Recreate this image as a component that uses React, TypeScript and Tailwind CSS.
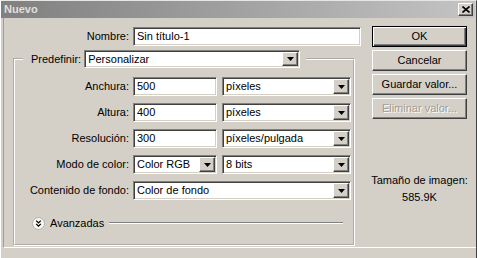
import React from "react";

const sunken =
  "border border-t-[#808080] border-l-[#808080] border-b-white border-r-white shadow-[inset_1px_1px_0_#404040,inset_-1px_-1px_0_#d4d0c8]";
const raised =
  "border border-t-white border-l-white border-b-[#404040] border-r-[#404040] shadow-[inset_-1px_-1px_0_#808080]";

function Field({ value, w }: { value: string; w: string }) {
  return (
    <div className={`${w} h-[19px] bg-white ${sunken} flex items-center pl-[3px] leading-none`}>
      {value}
    </div>
  );
}

function Arrow() {
  return (
    <div className={`w-[16px] h-full bg-[#d4d0c8] ${raised} flex items-center justify-center`}>
      <svg width="7" height="4" viewBox="0 0 7 4">
        <path d="M0 0H7L3.5 4Z" fill="#000" />
      </svg>
    </div>
  );
}

function Select({ value, w, h = "h-[19px]" }: { value: string; w: string; h?: string }) {
  return (
    <div className={`${w} ${h} bg-white ${sunken} flex items-stretch p-[1px]`}>
      <span className="flex-1 flex items-center pl-[2px] leading-none">{value}</span>
      <Arrow />
    </div>
  );
}

function Row({ label, children }: { label: string; children: React.ReactNode }) {
  return (
    <div className="flex items-center h-[19px]">
      <span className="w-[115px] text-right pr-[1px]">{label}</span>
      <div className="ml-[3px] flex gap-[5px]">{children}</div>
    </div>
  );
}

function Button({ label, main, disabled }: { label: string; main?: boolean; disabled?: boolean }) {
  if (main) {
    return (
      <div className="h-[21px] border border-black shadow-[inset_1px_1px_0_#fff,inset_-1px_-1px_0_#404040,inset_-2px_-2px_0_#808080] flex items-center justify-center">
        {label}
      </div>
    );
  }
  return (
    <div
      className={`h-[21px] ${raised} flex items-center justify-center ${
        disabled ? "text-[#a09d98] [text-shadow:1px_1px_0_#fff]" : ""
      }`}
    >
      {label}
    </div>
  );
}

export default function App() {
  return (
    <div className="w-[477px] h-[258px] bg-[#d4d0c8] border-t border-l border-t-[#e8e6e2] border-l-white border-r border-r-[#404040] text-[11px] text-black font-['Liberation_Sans',Arial,sans-serif] overflow-hidden">
      <div className="h-[17px] mr-[1px] flex items-center justify-between bg-gradient-to-r from-[#808080] to-[#c4c4c4] pl-[3px] pr-[2px]">
        <span className="font-bold text-[#e2dfda] leading-none">Nuevo</span>
        <div className={`w-[15px] h-[13px] bg-[#d4d0c8] ${raised} flex items-center justify-center`}>
          <svg width="8" height="7" viewBox="0 0 8 7">
            <path d="M0.5 0.5L7.5 6.5M7.5 0.5L0.5 6.5" stroke="#000" strokeWidth="1.6" />
          </svg>
        </div>
      </div>

      <div className="h-[230px] ml-[2px] border-l border-l-[#a09c96] border-b border-b-white flex pl-[9px]">
        <div className="w-[348px] pt-[9px]">
          <div className="flex items-center h-[19px]">
            <span className="w-[117px] text-right pr-[1px]">Nombre:</span>
            <div className="ml-[3px]">
              <Field value="Sin título-1" w="w-[228px]" />
            </div>
          </div>

          <fieldset className="mt-[4px] w-[342px] border-2 border-white [border-style:groove] pb-[14px]">
            <legend className="ml-[8px] pl-[8px] pr-[6px] flex items-center h-[18px]">
              <span>Predefinir:</span>
              <div className="ml-[3px]">
                <Select value="Personalizar" w="w-[216px]" h="h-[18px]" />
              </div>
            </legend>

            <div className="mt-[9px] flex flex-col gap-[7px]">
              <Row label="Anchura:">
                <Field value="500" w="w-[84px]" />
                <Select value="píxeles" w="w-[129px]" />
              </Row>
              <Row label="Altura:">
                <Field value="400" w="w-[84px]" />
                <Select value="píxeles" w="w-[129px]" />
              </Row>
              <Row label="Resolución:">
                <Field value="300" w="w-[84px]" />
                <Select value="píxeles/pulgada" w="w-[129px]" />
              </Row>
              <Row label="Modo de color:">
                <Select value="Color RGB" w="w-[84px]" />
                <Select value="8 bits" w="w-[129px]" />
              </Row>
              <Row label="Contenido de fondo:">
                <Select value="Color de fondo" w="w-[218px]" />
              </Row>
            </div>

            <div className="mt-[16px] h-[14px] flex items-center pl-[17px] pr-[10px]">
              <svg width="13" height="13" viewBox="0 0 13 13">
                <circle cx="6.5" cy="6.5" r="6" fill="#f6f5f2" stroke="#b4b1ab" />
                <path d="M4.2 3.6L6.5 5.9L8.8 3.6M4.2 6.9L6.5 9.2L8.8 6.9" stroke="#000" strokeWidth="1.3" fill="none" />
              </svg>
              <span className="ml-[5px]">Avanzadas</span>
              <div className="flex-1 ml-[5px] border-t border-t-[#808080] border-b border-b-white" />
            </div>
          </fieldset>
        </div>

        <div className="w-[95px] ml-[11px] pt-[8px] flex flex-col">
          <div className="flex flex-col gap-[3px]">
            <Button label="OK" main />
            <Button label="Cancelar" />
            <Button label="Guardar valor..." />
            <Button label="Eliminar valor..." disabled />
          </div>
          <div className="mt-[55px] -mx-[8px] text-center whitespace-nowrap leading-[13px]">Tamaño de imagen:</div>
          <div className="mt-[4px] text-center leading-[13px]">585.9K</div>
        </div>
      </div>
    </div>
  );
}
